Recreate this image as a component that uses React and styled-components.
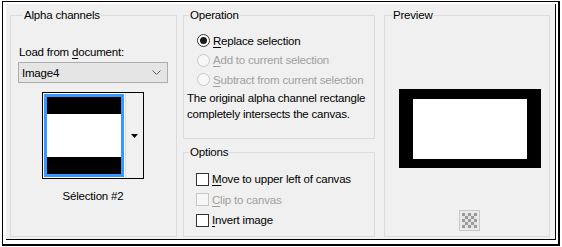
import React from 'react';
import styled, { createGlobalStyle } from 'styled-components';

const GlobalStyle = createGlobalStyle`
  html, body {
    margin: 0;
    padding: 0;
    background: #ffffff;
  }
  body {
    font-family: "Liberation Sans", Arial, sans-serif;
    font-size: 11.5px;
    letter-spacing: -0.2px;
    color: #000;
  }
`;

// --- FRAME ---

const Frame = styled.div`
  box-sizing: border-box;
  margin: 1px 0 0 2px;
  width: 558px;
  height: 245px;
  border: 1px solid #000;
  border-right-width: 2px;
  border-bottom-width: 2px;
  padding: 2px 2px 4px 3px;
  background: #fff;
`;

const Dialog = styled.div`
  box-sizing: border-box;
  height: 100%;
  background: #f0f0f0;
  border-right: 1px solid #000;
  border-bottom: 1px solid #000;
  padding: 4px 2px 2px 4px;
  display: grid;
  grid-template-columns: 167px 195px 166px;
  column-gap: 6px;
`;

const Column = styled.div`
  display: flex;
  flex-direction: column;
  gap: 6px;
  margin-right: ${p => p.$gapRight || 0}px;
`;

const Group = styled.fieldset`
  box-sizing: border-box;
  margin: 0;
  padding: 0 0 0 ${p => p.$pad || 0}px;
  border: 1px solid #dcdcdc;
  min-width: 0;
  flex: ${p => p.$grow ? 1 : 'none'};
  height: ${p => p.$h ? `${p.$h}px` : 'auto'};
  display: flex;
  flex-direction: column;
  white-space: nowrap;
`;

const Legend = styled.legend`
  padding: 0 1px;
  margin-left: ${p => p.$offset || 5}px;
  line-height: 14px;
`;

const Key = styled.span`
  text-decoration: underline;
  text-underline-offset: 2px;
`;

// --- ALPHA CHANNELS ---

const FieldLabel = styled.div`
  margin-top: 23px;
  line-height: 14px;
  padding-left: 1px;
`;

const Combo = styled.div`
  box-sizing: border-box;
  margin: 3px 8px 0 0;
  height: 21px;
  border: 1px solid #adadad;
  background: #e5e5e5;
  display: flex;
  align-items: center;
  justify-content: space-between;
  padding: 0 6px 0 3px;
`;

const Thumb = styled.div`
  box-sizing: border-box;
  align-self: center;
  margin: 9px 8px 0 0;
  width: 102px;
  height: 87px;
  border: 1px solid #000;
  display: flex;
  background: #f0f0f0;
`;

const ThumbImage = styled.div`
  box-sizing: border-box;
  width: 82px;
  height: 85px;
  background: #fff;
  padding: 1px;
`;

const ThumbSel = styled.div`
  box-sizing: border-box;
  height: 100%;
  border: 3px solid #3399ff;
  display: grid;
  grid-template-rows: 17px 1fr 17px;
`;

const Band = styled.div`
  background: ${p => p.$dark ? '#000' : '#fff'};
`;

const ThumbDrop = styled.div`
  flex: 1;
  display: flex;
  align-items: center;
  justify-content: center;
  border-left: 1px solid #dcdcdc;
`;

const Caption = styled.div`
  margin-top: 10px;
  text-align: center;
  line-height: 14px;
  padding-right: 8px;
`;

// --- OPERATION / OPTIONS ---

const OptionList = styled.div`
  display: flex;
  flex-direction: column;
  margin-top: ${p => p.$top}px;
  padding-left: ${p => p.$left}px;
`;

const OptionRow = styled.label`
  display: flex;
  align-items: center;
  height: ${p => p.$h}px;
  gap: 3px;
  color: ${p => p.$disabled ? '#a0a0a0' : '#000'};
`;

const RadioMark = styled.span`
  box-sizing: border-box;
  width: 13px;
  height: 13px;
  border-radius: 50%;
  border: 1px solid ${p => p.$disabled ? '#c8c8c8' : '#333'};
  background: ${p => p.$disabled ? '#f7f7f7' : '#fff'};
  display: flex;
  align-items: center;
  justify-content: center;

  &::after {
    content: "";
    width: 7px;
    height: 7px;
    border-radius: 50%;
    background: ${p => p.$checked ? '#1a1a1a' : 'transparent'};
  }
`;

const CheckMark = styled.span`
  box-sizing: border-box;
  width: 13px;
  height: 13px;
  border: 1px solid ${p => p.$disabled ? '#c8c8c8' : '#333'};
  background: ${p => p.$disabled ? '#f7f7f7' : '#fff'};
`;

const Note = styled.p`
  margin: 0;
  padding-left: 3px;
  line-height: 16px;
`;

// --- PREVIEW ---

const PreviewArea = styled.div`
  flex: 1;
  display: flex;
  align-items: center;
  justify-content: center;
  padding: 24px 0 0 6px;
`;

const PreviewShape = styled.div`
  box-sizing: border-box;
  width: 142px;
  height: 79px;
  background: #fff;
  border: solid #000;
  border-width: 10px 14px 9px 14px;
`;

const CheckerButton = styled.div`
  align-self: center;
  margin: 0 0 5px 4px;
  width: 21px;
  height: 21px;
  box-sizing: border-box;
  border: 1px solid #c8c8c8;
  background: #eaeaea;
  display: flex;
  align-items: center;
  justify-content: center;
`;

const radios = [
  { k: 'R', rest: 'eplace selection', checked: true },
  { k: 'A', rest: 'dd to current selection', disabled: true },
  { k: 'S', rest: 'ubtract from current selection', disabled: true },
];

const checks = [
  { k: 'M', rest: 'ove to upper left of canvas' },
  { k: 'C', rest: 'lip to canvas', disabled: true },
  { k: 'I', rest: 'nvert image' },
];

export default function App() {
  return (
    <>
      <GlobalStyle />
      <Frame>
        <Dialog>
          <Group $pad={7}>
            <Legend>Alpha channels</Legend>
            <FieldLabel>Load from <Key>d</Key>ocument:</FieldLabel>
            <Combo>
              <span>Image4</span>
              <svg width="9" height="5" viewBox="0 0 9 5">
                <polyline points="0.5,0.5 4.5,4.5 8.5,0.5" fill="none" stroke="#606060" strokeWidth="1" />
              </svg>
            </Combo>
            <Thumb>
              <ThumbImage>
                <ThumbSel>
                  <Band $dark />
                  <Band />
                  <Band $dark />
                </ThumbSel>
              </ThumbImage>
              <ThumbDrop>
                <svg width="7" height="4" viewBox="0 0 7 4">
                  <polygon points="0,0 7,0 3.5,4" fill="#000" />
                </svg>
              </ThumbDrop>
            </Thumb>
            <Caption>Sélection #2</Caption>
          </Group>

          <Column $gapRight={3}>
            <Group $h={131}>
              <Legend>Operation</Legend>
              <OptionList $top={9} $left={13}>
                {radios.map(r => (
                  <OptionRow key={r.k} $h={19.5} $disabled={r.disabled}>
                    <RadioMark $checked={r.checked} $disabled={r.disabled} />
                    <span><Key>{r.k}</Key>{r.rest}</span>
                  </OptionRow>
                ))}
              </OptionList>
              <Note>The original alpha channel rectangle<br />completely intersects the canvas.</Note>
            </Group>
            <Group $grow>
              <Legend>Options</Legend>
              <OptionList $top={10} $left={12}>
                {checks.map(c => (
                  <OptionRow key={c.k} $h={20.5} $disabled={c.disabled}>
                    <CheckMark $disabled={c.disabled} />
                    <span><Key>{c.k}</Key>{c.rest}</span>
                  </OptionRow>
                ))}
              </OptionList>
            </Group>
          </Column>

          <Group>
            <Legend $offset={7}>Preview</Legend>
            <PreviewArea>
              <PreviewShape />
            </PreviewArea>
            <CheckerButton>
              <svg width="15" height="15" viewBox="0 0 15 15">
                {[0, 1, 2, 3, 4].flatMap(r => [0, 1, 2, 3, 4].map(c => (
                  <rect key={`${r}-${c}`} x={c * 3} y={r * 3} width="3" height="3"
                    fill={(r + c) % 2 === 0 ? '#9a9a9a' : '#e4e4e4'} />
                )))}
              </svg>
            </CheckerButton>
          </Group>
        </Dialog>
      </Frame>
    </>
  );
}
